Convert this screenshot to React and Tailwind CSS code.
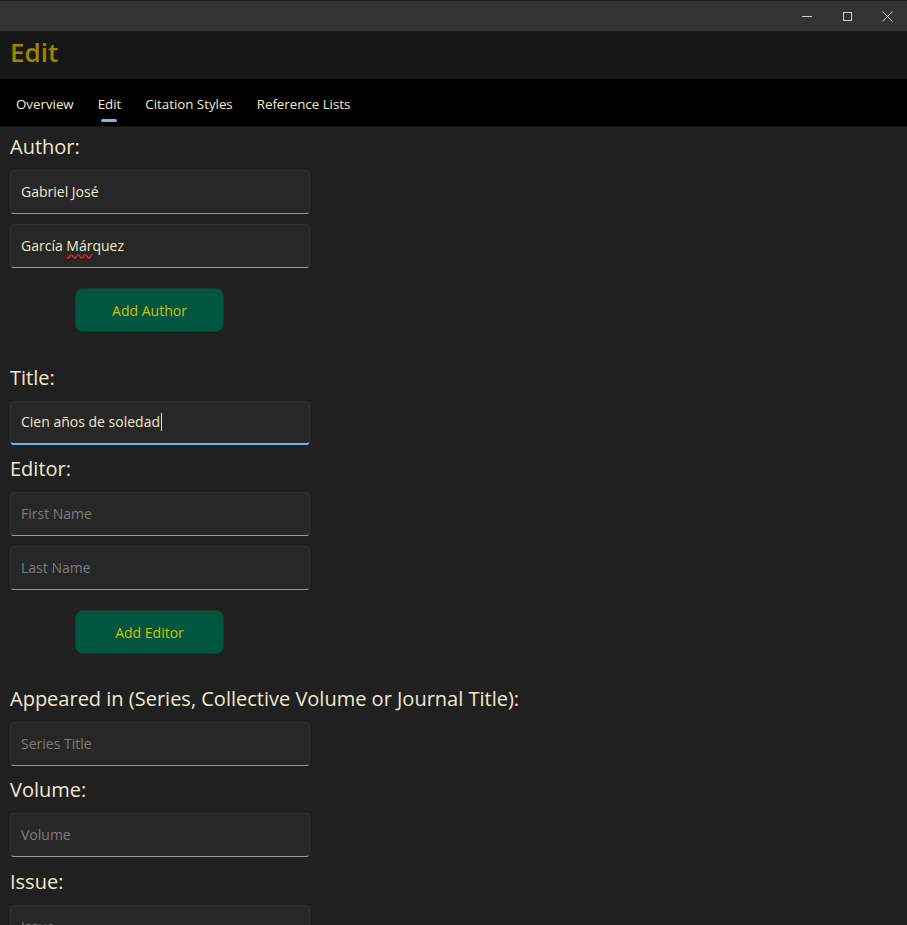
import React from "react";

const font = { fontFamily: '"Open Sans", "Noto Sans", sans-serif' };

const Field = ({ value, placeholder, focused, children }) => (
    <div
        className={`shrink-0 w-[300px] h-[44px] rounded-[4px] bg-[#272727] border border-[#303030] flex items-center px-[10px] pb-[2px] text-[14px] ${
            focused ? "border-b-2 border-b-[#6fb3e6]" : "border-b-[#9a9a9a]"
        }`}
    >
        {children ? (
            children
        ) : value ? (
            <span className="text-[#efe9cf]">{value}</span>
        ) : (
            <span className="text-[#7d7d7d]">{placeholder}</span>
        )}
    </div>
);

const Label = ({ children, className = "" }) => (
    <div className={`shrink-0 text-[20px] leading-[26px] text-[#efe9cf] mb-[10px] ${className}`}>{children}</div>
);

const AddButton = ({ children }) => (
    <button className="ml-[65px] w-[149px] h-[44px] rounded-[8px] bg-[#00573f] border border-[#1c3a30] text-[#d8bd00] text-[14px]">
        {children}
    </button>
);

const App = () => {
    const tabs = ["Overview", "Edit", "Citation Styles", "Reference Lists"];

    return (
        <div className="w-[907px] h-[925px] overflow-hidden bg-[#202020] flex flex-col" style={font}>
            {/* title bar */}
            <div className="shrink-0 h-[31px] bg-[#333333] border-t border-[#1e1e1e] flex justify-end items-center">
                <div className="w-[40px] flex justify-center">
                    <div className="w-[10px] h-px bg-[#cfcfcf]" />
                </div>
                <div className="w-[40px] flex justify-center">
                    <div className="w-[9px] h-[9px] border border-[#cfcfcf]" />
                </div>
                <div className="w-[40px] flex justify-center">
                    <svg width="11" height="11" viewBox="0 0 11 11" stroke="#cfcfcf" strokeWidth="1">
                        <path d="M0.5 0.5 L10.5 10.5 M10.5 0.5 L0.5 10.5" />
                    </svg>
                </div>
            </div>

            {/* header */}
            <div className="shrink-0 h-[48px] bg-[#171717] flex items-center px-[10px] pb-[6px]">
                <span className="text-[26px] font-semibold text-[#a08300]">Edit</span>
            </div>

            {/* tabs */}
            <div className="shrink-0 h-[48px] bg-black flex items-stretch pl-[4px] pt-[4px] border-b border-[#141414]">
                {tabs.map((t) => (
                    <div key={t} className="relative flex items-center px-[12px] text-[13.3px] text-[#f2ecd2]">
                        {t}
                        {t === "Edit" && (
                            <div className="absolute left-1/2 -translate-x-1/2 bottom-[4px] w-[16px] h-[3px] rounded-full bg-[#76b9ec]" />
                        )}
                    </div>
                ))}
            </div>

            {/* content */}
            <div className="shrink-0 pl-[10px] pt-[7px] flex flex-col">
                <Label>Author:</Label>
                <div className="flex flex-col gap-[10px]">
                    <Field value="Gabriel José" />
                    <Field>
                        <span className="text-[#efe9cf]">
                            García <span className="underline decoration-wavy decoration-[#e02020] underline-offset-[3px]">Már</span>quez
                        </span>
                    </Field>
                </div>
                <div className="mt-[20px]">
                    <AddButton>Add Author</AddButton>
                </div>

                <Label className="mt-[33px]">Title:</Label>
                <Field focused>
                    <span className="text-[#efe9cf] flex items-center">
                        Cien años de soledad
                        <span className="inline-block w-px h-[18px] bg-[#efe9cf] ml-px" />
                    </span>
                </Field>

                <Label className="mt-[11px]">Editor:</Label>
                <div className="flex flex-col gap-[10px]">
                    <Field placeholder="First Name" />
                    <Field placeholder="Last Name" />
                </div>
                <div className="mt-[20px]">
                    <AddButton>Add Editor</AddButton>
                </div>

                <Label className="mt-[32px]">Appeared in (Series, Collective Volume or Journal Title):</Label>
                <Field placeholder="Series Title" />

                <Label className="mt-[11px]">Volume:</Label>
                <Field placeholder="Volume" />

                <Label className="mt-[12px]">Issue:</Label>
                <Field placeholder="Issue" />
            </div>
        </div>
    );
};

export default App;
